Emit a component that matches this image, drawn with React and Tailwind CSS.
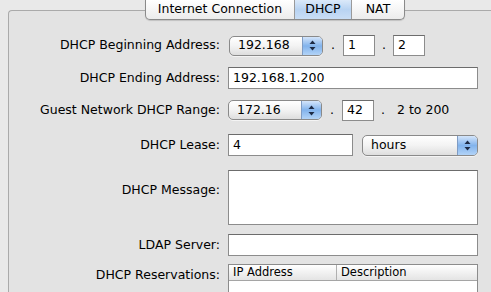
import React from "react";

const Arrows = () => (
  <svg width="7" height="11" viewBox="0 0 7 11">
    <path d="M3.5 0.5 L6.5 4 L0.5 4 Z" fill="#1d2a44" />
    <path d="M3.5 10.5 L6.5 7 L0.5 7 Z" fill="#1d2a44" />
  </svg>
);

const Popup = ({ value, className }) => (
  <div
    className={
      "flex h-[20px] items-stretch overflow-hidden rounded-[5px] border border-[#8a8a8a] bg-gradient-to-b from-white via-[#f3f3f3] to-[#dedede] shadow-[0_1px_0_rgba(255,255,255,0.6)] " +
      className
    }
  >
    <div className="flex flex-1 items-center pl-2 leading-none">{value}</div>
    <div className="flex w-[20px] items-center justify-center border-l border-[#7f9cc4] bg-gradient-to-b from-[#d4e5fa] via-[#82b3ec] to-[#b2d3f7]">
      <Arrows />
    </div>
  </div>
);

const Field = ({ value, className }) => (
  <div
    className={
      "flex items-center border border-[#8c8c8c] border-t-[#6c6c6c] bg-white pl-1 leading-none " +
      className
    }
  >
    {value}
  </div>
);

const Label = ({ children, top }) => (
  <div
    className={
      "w-[211px] shrink-0 pr-0 text-right " + (top ? "self-start pt-[11px]" : "")
    }
  >
    {children}
  </div>
);

const Dot = ({ w }) => <div className={"text-center " + w}>.</div>;

export default function App() {
  return (
    <div className="flex h-[292px] w-[491px] flex-col overflow-hidden bg-[#e9e9e9] font-['DejaVu_Sans',sans-serif] text-[12.5px] text-black">
      {/* tab bar */}
      <div className="relative z-10 flex pl-[145px]">
        <div className="flex h-[20px] overflow-hidden rounded-b-[5px] border border-t-0 border-[#8a8a8a] bg-gradient-to-b from-white to-[#ececec] shadow-[0_1px_1px_rgba(0,0,0,0.15)]">
          <div className="flex w-[149px] items-center justify-center border-r border-[#9a9a9a]">
            Internet Connection
          </div>
          <div className="flex w-[57px] items-center justify-center border-r border-[#9a9a9a] bg-gradient-to-b from-[#dbe9f9] via-[#b8d3f2] to-[#c9def6]">
            DHCP
          </div>
          <div className="flex w-[52px] items-center justify-center">NAT</div>
        </div>
      </div>

      {/* panel */}
      <div className="ml-2 -mt-[10px] flex-1 rounded-tl-[4px] border border-r-0 border-b-0 border-[#aaaaaa] bg-[#e3e3e3] pt-[24px]">
        <div className="flex h-[21px] items-center">
          <Label>DHCP Beginning Address:</Label>
          <div className="ml-[9px] flex items-center">
            <Popup value="192.168" className="w-[94px]" />
            <Dot w="w-[20px]" />
            <Field value="1" className="h-[21px] w-[32px]" />
            <Dot w="w-[18px]" />
            <Field value="2" className="h-[21px] w-[32px]" />
          </div>
        </div>

        <div className="mt-[11px] flex h-[22px] items-center">
          <Label>DHCP Ending Address:</Label>
          <Field value="192.168.1.200" className="ml-2 h-[22px] w-[250px]" />
        </div>

        <div className="mt-[10px] flex h-[22px] items-center">
          <Label>Guest Network DHCP Range:</Label>
          <div className="ml-2 flex items-center">
            <Popup value="172.16" className="w-[94px]" />
            <Dot w="w-[20px]" />
            <Field value="42" className="h-[21px] w-[32px]" />
            <Dot w="w-[18px]" />
            <div className="ml-[5px]">2 to 200</div>
          </div>
        </div>

        <div className="mt-[13px] flex h-[22px] items-center">
          <Label>DHCP Lease:</Label>
          <Field value="4" className="ml-2 h-[22px] w-[125px]" />
          <Popup value="hours" className="ml-[9px] h-[21px] w-[116px]" />
        </div>

        <div className="mt-[14px] flex h-[55px]">
          <Label top>DHCP Message:</Label>
          <div className="ml-2 h-[55px] w-[250px] border border-[#8c8c8c] border-t-[#6c6c6c] bg-white" />
        </div>

        <div className="mt-[9px] flex h-[22px] items-center">
          <Label>LDAP Server:</Label>
          <Field value="" className="ml-2 h-[22px] w-[250px]" />
        </div>

        <div className="mt-[8px] flex">
          <Label>
            <div className="pt-[2px]">DHCP Reservations:</div>
          </Label>
          <div className="ml-2 h-[40px] w-[250px] border border-[#8c8c8c] bg-white">
            <div className="flex h-[16px] border-b border-[#a5a5a5] bg-gradient-to-b from-white to-[#e4e4e4] text-[11.5px] leading-none">
              <div className="flex w-[108px] items-center border-r border-[#b0b0b0] pl-1">
                IP Address
              </div>
              <div className="flex items-center pl-1">Description</div>
            </div>
          </div>
        </div>
      </div>
    </div>
  );
}
